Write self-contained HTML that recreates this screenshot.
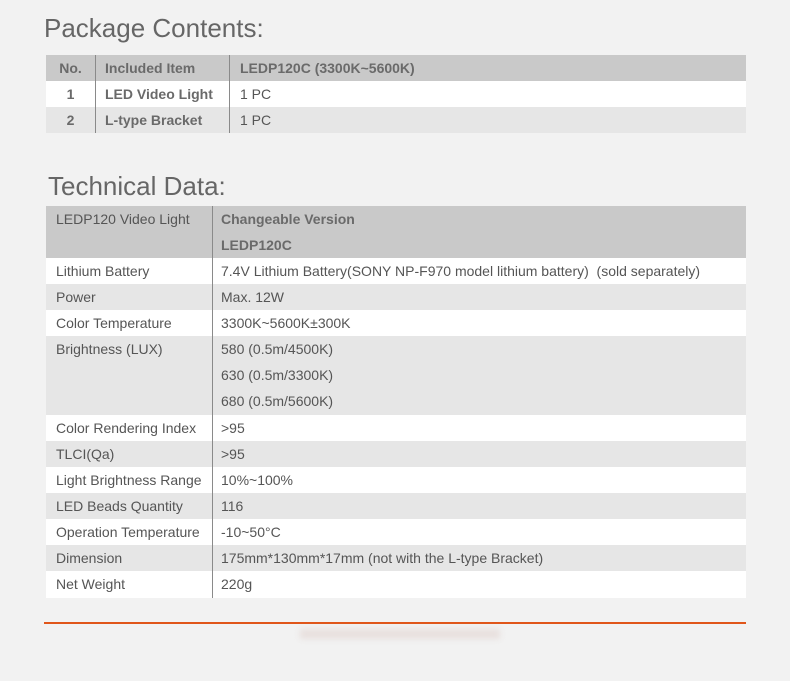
<!DOCTYPE html>
<html><head><meta charset="utf-8"><style>
body{margin:0;width:790px;height:681px;background:#f2f2f2;font-family:"Liberation Sans",sans-serif;position:relative;overflow:hidden}
.t{position:absolute;font-size:26px;color:#666;margin:0;font-weight:normal}
table{position:absolute;border-collapse:collapse;font-size:14px;color:#555;left:46px;width:700px}
td{padding:0 0 0 10px;height:26px;line-height:26px;vertical-align:top;overflow:hidden}
td+td{border-left:1px solid #8a8a8a;padding-left:8px}
.h{background:#c9c9c9}
.g{background:#e6e6e6}
.w{background:#fff}
.b{font-weight:bold;color:#6a6a6a}
.c{text-align:center;padding-left:0}
</style></head><body>
<div class="t" style="left:44px;top:13px">Package Contents:</div>
<table style="top:55px">
<tr class="h b"><td class="c" style="width:49px">No.</td><td style="width:124px;padding-left:9px">Included Item</td><td style="padding-left:10px">LEDP120C (3300K~5600K)</td></tr>
<tr class="w b"><td class="c">1</td><td style="padding-left:9px">LED Video Light</td><td style="font-weight:normal;color:#555;padding-left:10px">1 PC</td></tr>
<tr class="g b"><td class="c">2</td><td style="padding-left:9px">L-type Bracket</td><td style="font-weight:normal;color:#555;padding-left:10px">1 PC</td></tr>
</table>
<div class="t" style="left:48px;top:171px">Technical Data:</div>
<table style="top:206px">
<tr class="h"><td style="width:156px;height:52px">LEDP120 Video Light</td><td class="b" style="height:52px">Changeable Version<br>LEDP120C</td></tr>
<tr class="w"><td>Lithium Battery</td><td>7.4V Lithium Battery(SONY NP-F970 model lithium battery)&nbsp; (sold separately)</td></tr>
<tr class="g"><td>Power</td><td>Max. 12W</td></tr>
<tr class="w"><td>Color Temperature</td><td>3300K~5600K±300K</td></tr>
<tr class="g"><td style="height:79px">Brightness (LUX)</td><td style="height:79px">580 (0.5m/4500K)<br>630 (0.5m/3300K)<br>680 (0.5m/5600K)</td></tr>
<tr class="w"><td>Color Rendering Index</td><td>&gt;95</td></tr>
<tr class="g"><td>TLCI(Qa)</td><td>&gt;95</td></tr>
<tr class="w"><td>Light Brightness Range</td><td>10%~100%</td></tr>
<tr class="g"><td>LED Beads Quantity</td><td>116</td></tr>
<tr class="w"><td>Operation Temperature</td><td>-10~50°C</td></tr>
<tr class="g"><td>Dimension</td><td>175mm*130mm*17mm (not with the L-type Bracket)</td></tr>
<tr class="w"><td style="height:27px">Net Weight</td><td>220g</td></tr>
</table>
<div style="position:absolute;left:44px;top:622px;width:702px;height:2px;background:#e0561a"></div>
<div style="position:absolute;left:300px;top:629px;width:200px;height:10px;background:#e8e0de;filter:blur(3px)"></div>
</body></html>
